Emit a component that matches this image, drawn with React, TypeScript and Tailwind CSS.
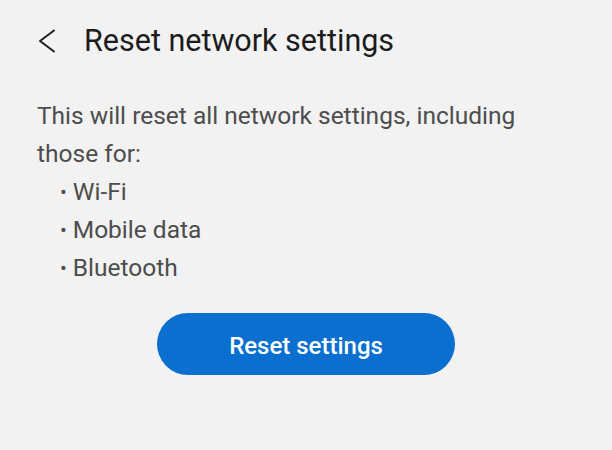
export default function App() {
  const items = ["Wi-Fi", "Mobile data", "Bluetooth"];

  return (
    <div className="h-[450px] w-[612px] overflow-hidden bg-[#f2f2f2] font-['Roboto','Liberation_Sans',sans-serif]">
      {/* header */}
      <div className="flex h-[82px] items-center pl-[37px]">
        <svg width="20" height="24" viewBox="0 0 20 24" className="mr-[27px]">
          <path
            d="M17 1.5 L3 12 L17 22.5"
            fill="none"
            stroke="#1e1e1e"
            strokeWidth="2"
            strokeLinecap="round"
            strokeLinejoin="round"
          />
        </svg>
        <h1 className="text-[30.5px] leading-none text-[#1c1c1c]">
          Reset network settings
        </h1>
      </div>

      <div className="px-[37px] pt-[15px] text-[24.5px] leading-[38px] text-[#4d4d4d]">
        <p>
          This will reset all network settings, including
          <br />
          those for:
        </p>
        <ul className="pl-[23px]">
          {items.map((item) => (
            <li key={item} className="flex items-center gap-[6px]">
              <span className="text-[20px]">•</span>
              {item}
            </li>
          ))}
        </ul>
      </div>

      <div className="mt-[26px] flex justify-center">
        <button className="h-[62px] w-[298px] rounded-full bg-[#0a6fcf] pt-[3px] text-[24px] font-medium text-white">
          Reset settings
        </button>
      </div>
    </div>
  );
}
